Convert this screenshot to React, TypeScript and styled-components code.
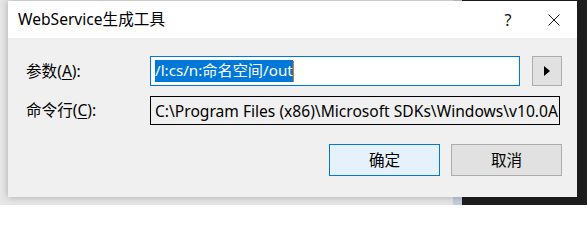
import React from "react";
import styled, { createGlobalStyle } from "styled-components";

const GlobalStyle = createGlobalStyle`
  html, body { margin: 0; padding: 0; }
  body { font-family: "Noto Sans", "Noto Sans CJK SC", sans-serif; }
`;

const Page = styled.div`
  width: 587px;
  height: 205px;
  overflow: hidden;
  background: linear-gradient(
    to right,
    #e6e6e6 0px,
    #e6e6e6 453px,
    #c3cedb 453px,
    #c3cedb 462px,
    #1e1e1e 462px
  );
  display: flex;
  align-items: flex-start;
`;

const Dialog = styled.div`
  margin: 1px 0 0 8px;
  width: 569px;
  height: 196px;
  background: #f0f0f0;
  box-shadow: 0 0 7px rgba(0, 0, 0, 0.28);
  display: flex;
  flex-direction: column;
`;

const TitleBar = styled.div`
  height: 37px;
  background: #ffffff;
  display: flex;
  align-items: center;
  padding-left: 10px;
  color: #000;
`;

const TitleText = styled.div`
  flex: 1;
  font-size: 15.6px;
  line-height: 20px;
  padding-bottom: 2px;
`;

const TitleButton = styled.div`
  width: 46px;
  height: 37px;
  display: flex;
  align-items: center;
  justify-content: center;
  font-size: 16px;
  color: #111;
`;

const Body = styled.div`
  flex: 1;
  padding: 18px 15px 0 18px;
  display: flex;
  flex-direction: column;
`;

const Row = styled.div<{ $gap?: number }>`
  display: flex;
  align-items: center;
  margin-bottom: ${(p) => p.$gap ?? 0}px;
`;

const Label = styled.div`
  width: 124px;
  font-size: 15.6px;
  color: #000;
  padding-bottom: 2px;
`;

const Key = styled.span`
  text-decoration: underline;
  text-underline-offset: 2px;
  text-decoration-thickness: 1px;
`;

const Field = styled.div<{ $width: number; $active?: boolean; $height: number }>`
  width: ${(p) => p.$width}px;
  height: ${(p) => p.$height}px;
  box-sizing: border-box;
  border: 1px solid ${(p) => (p.$active ? "#0078d7" : "#000000")};
  background: ${(p) => (p.$active ? "#ffffff" : "#f0f0f0")};
  display: flex;
  align-items: center;
  padding-left: 4px;
  overflow: hidden;
  white-space: nowrap;
  font-size: ${(p) => (p.$active ? 15.2 : 15.6)}px;
  color: #000;
`;

const Selected = styled.span`
  background: #0078d7;
  color: #ffffff;
  line-height: 21px;
  padding-bottom: 1px;
`;

const Caret = styled.span`
  display: inline-block;
  width: 1px;
  height: 21px;
  background: #e07b10;
`;

const ArrowButton = styled.div`
  margin-left: 12px;
  width: 30px;
  height: 30px;
  box-sizing: border-box;
  background: #e1e1e1;
  border: 1px solid #adadad;
  display: flex;
  align-items: center;
  justify-content: center;
`;

const Actions = styled.div`
  margin-top: 19px;
  display: flex;
  justify-content: flex-end;
  gap: 11px;
`;

const Button = styled.div<{ $default?: boolean }>`
  width: 111px;
  height: 32px;
  box-sizing: border-box;
  border: 1px solid ${(p) => (p.$default ? "#0078d7" : "#adadad")};
  background: ${(p) => (p.$default ? "#e5f1fb" : "#e1e1e1")};
  display: flex;
  align-items: center;
  justify-content: center;
  font-size: 15.6px;
  color: #000;
  padding-bottom: 1px;
`;

export default function App() {
  return (
    <>
      <GlobalStyle />
      <Page>
        <Dialog>
          <TitleBar>
            <TitleText>WebService生成工具</TitleText>
            <TitleButton>?</TitleButton>
            <TitleButton>
              <svg width="12" height="12" viewBox="0 0 12 12">
                <path d="M0.5 0.5 L11.5 11.5 M11.5 0.5 L0.5 11.5" stroke="#111" strokeWidth="1" />
              </svg>
            </TitleButton>
          </TitleBar>
          <Body>
            <Row $gap={10}>
              <Label>
                参数(<Key>A</Key>):
              </Label>
              <Field $width={370} $height={30} $active>
                <Selected>/l:cs/n:命名空间/out</Selected>
                <Caret />
              </Field>
              <ArrowButton>
                <svg width="8" height="12" viewBox="0 0 8 12">
                  <path d="M1 1 L7 6 L1 11 Z" fill="#000" />
                </svg>
              </ArrowButton>
            </Row>
            <Row>
              <Label>
                命令行(<Key>C</Key>):
              </Label>
              <Field $width={410} $height={29}>
                C:\Program Files (x86)\Microsoft SDKs\Windows\v10.0A
              </Field>
            </Row>
            <Actions>
              <Button $default>确定</Button>
              <Button>取消</Button>
            </Actions>
          </Body>
        </Dialog>
      </Page>
    </>
  );
}
